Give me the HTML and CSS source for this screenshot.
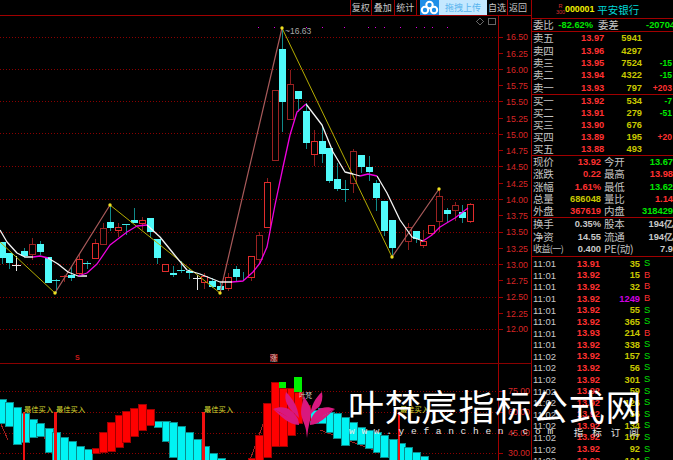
FILE: index.html
```html
<!DOCTYPE html>
<html lang="zh">
<head>
<meta charset="utf-8">
<title>行情</title>
<link rel="stylesheet" href="styles.css">
</head>
<body>
<div class="screen">
  <div class="charts">
    <div class="toolbar">
      <span class="tool first">复权</span><span class="tool">叠加</span><span class="tool">统计</span>
      <span class="upload">
        <span class="cloud"><svg width="19" height="15" viewBox="0 0 19 15"><g fill="none" stroke="#fff" stroke-width="2"><circle cx="9.5" cy="5" r="3.2"/><circle cx="5" cy="10" r="3.2"/><circle cx="14" cy="10" r="3.2"/></g></svg></span>
        <span class="upload-text">拖拽上传</span>
      </span>
      <span class="tool plain">自选</span><span class="tool last">返回</span>
    </div>
    <svg class="pane price" viewBox="0 16 532 347" shape-rendering="crispEdges">
      <g class="grid">
        <path d="M0 37H498M0 69H498M0 101H498M0 133H498M0 166H498M0 199H498M0 232H498M0 264H498M0 297H498M0 329H498"/>
      </g>
      <path class="axis" d="M498.500 15V363M498 37h5M498 53h5M498 69h5M498 85h5M498 101h5M498 118h5M498 134h5M498 150h5M498 166h5M498 183h5M498 199h5M498 215h5M498 232h5M498 248h5M498 264h5M498 280h5M498 297h5M498 313h5M498 329h5"/>
      <g class="scale">
        <text x="506" y="40">16.50</text><text x="506" y="57">16.25</text><text x="506" y="73">16.00</text><text x="506" y="89">15.75</text><text x="506" y="105">15.50</text><text x="506" y="122">15.25</text><text x="506" y="138">15.00</text><text x="506" y="154">14.75</text><text x="506" y="170">14.50</text><text x="506" y="187">14.25</text><text x="506" y="203">14.00</text><text x="506" y="219">13.75</text><text x="506" y="235">13.50</text><text x="506" y="252">13.25</text><text x="506" y="268">13.00</text><text x="506" y="284">12.75</text><text x="506" y="300">12.50</text><text x="506" y="317">12.25</text><text x="506" y="332">12.00</text>
      </g>
      <path class="dots" d="M258 27h1M274 27h1M306 27h1M322 27h1M344 27h1M368 27h1M375 27h1M384 27h1M400 27h1M416 27h1M424 27h1M432 27h1M447 27h1"/>
      <path class="tiny" d="M480 18l3.500 3.500-3.500 3.500-3.500-3.500z"/>
      <rect class="tiny" x="488.500" y="18.500" width="7" height="6"/>

      <path class="wick-red" d="M32.500 238V260M64.500 275V282M79.500 253V276M95.500 239V258M103.500 223V244M118.500 223V237M142.500 217V230M165.500 264V271M204.500 273V289M228.500 273V291M251.500 256V281M259.500 232V263M267.500 178V227M290.500 70V119M314.500 130V166M353.500 149V193M408.500 223V250M423.500 230V248M431.500 225V236M439.500 190V232M455.500 202V221M470.500 203V223"/>
      <path class="wick-cyan" d="M2.500 242V264M9.500 253V269M24.500 248V258M40.500 241V255M56.500 279V293M71.500 267V281M87.500 261V269M110.500 205V231M126.500 224V235M134.500 208V223M150.500 218V238M157.500 239V264M173.500 266V277M181.500 261V273M189.500 269V279M212.500 278V288M220.500 283V293M236.500 266V281M243.500 272V281M282.500 28V132M298.500 91V112M306.500 103V149M322.500 125V163M329.500 148V183M337.500 163V191M345.500 180V202M361.500 155V173M369.500 156V181M376.500 180V211M384.500 201V236M392.500 220V257M416.500 231V243M447.500 208V223M462.500 205V223"/>
      <path class="wick-white" d="M16.500 256V271M197.500 275V290"/>
      <path class="doji-white" d="M12 265H21M193 278H202"/>
      <path class="doji-cyan" d="M52 280H60M83 263H91M122 224H130M177 270H185M341 189H349"/>
      <path class="doji-red" d="M60 276H68"/>
      <g class="body-cyan">
        <rect x="-1" y="242" width="7" height="16"/><rect x="6" y="253" width="7" height="10"/><rect x="21" y="251" width="7" height="5"/><rect x="37" y="244" width="7" height="8"/><rect x="45" y="257" width="7" height="26"/><rect x="68" y="275" width="7" height="3"/><rect x="107" y="222" width="7" height="6"/><rect x="131" y="220" width="7" height="3"/><rect x="147" y="218" width="7" height="14"/><rect x="154" y="239" width="7" height="19"/><rect x="170" y="273" width="7" height="2"/><rect x="186" y="271" width="7" height="2"/><rect x="209" y="281" width="7" height="6"/><rect x="217" y="286" width="7" height="4"/><rect x="233" y="269" width="7" height="8"/><rect x="279" y="49" width="7" height="53"/><rect x="295" y="91" width="7" height="8"/><rect x="303" y="111" width="7" height="32"/><rect x="319" y="141" width="7" height="13"/><rect x="326" y="148" width="7" height="33"/><rect x="334" y="179" width="7" height="10"/><rect x="358" y="155" width="7" height="12"/><rect x="366" y="167" width="7" height="5"/><rect x="373" y="183" width="7" height="15"/><rect x="381" y="201" width="7" height="30"/><rect x="389" y="220" width="7" height="28"/><rect x="413" y="231" width="7" height="8"/><rect x="444" y="210" width="7" height="4"/><rect x="459" y="212" width="7" height="6"/>
      </g>
      <g class="body-red">
        <rect class="dim" x="29" y="244" width="6" height="10"/><rect x="76" y="259" width="6" height="14"/><rect x="92" y="243" width="6" height="15"/><rect class="dim" x="100" y="228" width="6" height="16"/><rect x="115" y="227" width="6" height="3"/><rect x="139" y="220" width="6" height="3"/><rect x="162" y="264" width="6" height="7"/><rect x="201" y="276" width="6" height="6"/><rect x="225" y="277" width="6" height="11"/><rect x="248" y="256" width="6" height="21"/><rect class="dim" x="256" y="235" width="6" height="24"/><rect x="264" y="182" width="6" height="45"/><rect class="dim" x="272" y="90" width="6" height="70"/><rect class="dim" x="287" y="84" width="6" height="35"/><rect x="311" y="141" width="6" height="13"/><rect class="dim" x="350" y="151" width="6" height="32"/><rect class="dim" x="405" y="227" width="6" height="14"/><rect x="420" y="241" width="6" height="4"/><rect x="428" y="225" width="6" height="8"/><rect class="dim" x="436" y="196" width="6" height="25"/><rect class="dim" x="452" y="205" width="6" height="5"/><rect x="467" y="204" width="6" height="17"/>
      </g>
      <g shape-rendering="geometricPrecision">
        <path class="zig-yellow" d="M0 242L55 293M110 205L220 293M282 28L392 257"/>
        <path class="zig-pink" d="M55 293L110 205M220 293L282 28M392 257L439 189"/>
        <path class="ma-white" d="M0 230L7 242L17 253L25 257L33 257M48 258L58 264L68 272L78 276L87 276M147 225L160 237L173 253L187 270L200 274L220 282L232 282M306 104L322 125L333 152L345 172L353 174L360 176M377 176L387 193L400 220L412 237L423 241"/>
        <path class="ma-magenta" d="M33 257L40 256L48 258M78 276L87 273L97 264L110 245L127 232L137 226L147 225M232 282L243 281L253 272L260 263L267 247L275 205L283 167L290 135L297 112L306 104M360 176L368 174L377 176M423 241L432 235L440 227L455 218L468 208"/>
        <g class="pivot"><circle cx="55" cy="293" r="1.700"/><circle cx="110" cy="205" r="1.700"/><circle cx="220" cy="293" r="1.700"/><circle cx="282" cy="28" r="1.700"/><circle cx="392" cy="257" r="1.700"/><circle cx="439" cy="189" r="1.700"/></g>
        <text class="peak" x="285" y="34">~16.63</text>
      </g>
      <g class="mark"><text x="75" y="360">S</text></g>
      <rect class="badge" x="270" y="354" width="8" height="7"/>
      <text class="badge-text" x="270" y="360.500">涨</text>
    </svg>
    <svg class="pane indicator" viewBox="0 363 532 97" shape-rendering="crispEdges">
      <path class="grid" d="M0 391H498M0 412H498M0 433H498M0 453H498"/>
      <path class="thin-red" d="M0 422L8 440M40 430L52 452M160 423L172 450M250 460L270 405M320 430L400 460"/>
      <g class="bar-cyan">
        <rect x="-2" y="399" width="7" height="24"/><rect x="5" y="402" width="7" height="24"/><rect x="13" y="407" width="7" height="37"/><rect x="21" y="413" width="7" height="29"/><rect x="29" y="419" width="7" height="18"/><rect x="36" y="423" width="7" height="13"/><rect x="45" y="428" width="7" height="24"/><rect x="52" y="432" width="7" height="30"/><rect x="60" y="437" width="7" height="25"/><rect x="68" y="441" width="7" height="21"/><rect x="76" y="446" width="7" height="16"/><rect x="84" y="449" width="7" height="13"/>
        <rect x="154" y="421" width="7" height="6"/><rect x="162" y="421" width="7" height="20"/><rect x="169" y="422" width="7" height="35"/><rect x="177" y="426" width="7" height="36"/><rect x="185" y="432" width="7" height="30"/><rect x="193" y="439" width="7" height="23"/><rect x="201" y="446" width="7" height="16"/><rect x="209" y="453" width="7" height="9"/><rect x="217" y="458" width="7" height="4"/>
        <rect x="310" y="410" width="8" height="13"/><rect x="318" y="408" width="7" height="15"/><rect x="326" y="412" width="7" height="20"/><rect x="333" y="413" width="8" height="25"/><rect x="341" y="417" width="7" height="28"/><rect x="349" y="422" width="7" height="18"/><rect x="357" y="427" width="7" height="17"/><rect x="365" y="430" width="7" height="18"/><rect x="373" y="432" width="7" height="20"/><rect x="380" y="435" width="7" height="22"/><rect x="389" y="439" width="8" height="23"/><rect x="397" y="443" width="7" height="19"/><rect x="404" y="447" width="8" height="15"/><rect x="412" y="452" width="7" height="10"/><rect x="420" y="456" width="7" height="6"/>
      </g>
      <g class="bar-red">
        <rect x="92" y="448" width="7" height="5"/><rect x="99" y="432" width="7" height="20"/><rect x="107" y="422" width="7" height="29"/><rect x="115" y="415" width="7" height="32"/><rect x="122" y="411" width="7" height="31"/><rect x="130" y="408" width="7" height="28"/><rect x="138" y="404" width="7" height="26"/><rect x="146" y="409" width="7" height="16"/>
        <rect x="248" y="458" width="7" height="4"/><rect x="255" y="435" width="7" height="27"/><rect x="263" y="403" width="7" height="54"/><rect x="271" y="382" width="7" height="64"/><rect x="279" y="388" width="7" height="58"/><rect x="287" y="388" width="7" height="47"/><rect x="294" y="392" width="7" height="31"/><rect x="302" y="405" width="7" height="15"/>
      </g>
      <g class="bar-green"><rect x="294" y="377" width="8" height="15"/><rect x="279" y="382" width="7" height="6"/></g>
      <path class="signal" d="M24 412V460M55.500 412V460M203.500 412V460M399 412V460"/>
      <g class="buy">
        <text x="24" y="412">最佳买入</text><text x="56" y="412">最佳买入</text><text x="204" y="412">最佳买入</text><text x="400" y="412">最佳买入</text>
      </g>
      <path class="axis" d="M498.500 363V460M498 391h5M498 412h5M498 433h5M498 453h5"/>
      <path class="rule" d="M0 363.500H532"/>
      <g class="scale">
        <text x="508" y="394">75.00</text><text x="508" y="415">60.00</text><text x="508" y="436">45.00</text><text x="508" y="456">30.00</text>
      </g>
    </svg>
    <div class="watermark">
      <svg class="lotus" viewBox="270 385 70 55">
        <g fill="#d8187e">
          <path d="M273 409C283 405 292 408 298 419L299 425C293 421 286 416 281 413C279 412 276 410 273 409Z"/>
          <path d="M273 409C281 416 289 425 299 425L298 421C291 419 283 414 273 409Z"/>
          <path d="M335 409C325 405 316 408 311 419L310 425C316 421 323 416 328 413C330 412 332 410 335 409Z"/>
          <path d="M335 409C327 416 319 425 310 425L311 421C318 419 326 414 335 409Z"/>
          <path d="M286 392C292 398 298 406 299 418C294 413 290 410 287 404C285 400 285 396 286 392Z"/>
          <path d="M322 392C323 398 322 403 319 407C315 410 312 412 310 416C311 406 315 398 322 392Z"/>
          <path d="M304 396C307 402 311 406 311 412C311 418 309 424 308 430L307 438L306 430C305 424 301 418 301 412C301 406 303 402 304 396Z"/>
        </g>
      </svg>
      <span class="logo-tag">叶梵</span>
      <div class="wm-text">
        <div class="wm-title">叶梵宸指标公式网</div>
        <div class="wm-sub"><span>www.yefanchen.com</span><span class="wm-sub-cn">指标订阅</span></div>
      </div>
    </div>
  </div>

  <aside class="panel">
    <header class="head"><span class="head-r"><b>R</b><b>300</b></span><span class="code">000001</span><span class="name">平安银行</span></header>
    <section class="block ratio">
      <span class="lab">委比</span><span class="num g c1">-82.62%</span><span class="lab c2">委差</span><span class="num g end">-20704</span>
    </section>
    <section class="block book sells">
      <span class="lab">卖五</span><span class="num r">13.97</span><span class="num y">5941</span><span class="num d"></span>
      <span class="lab">卖四</span><span class="num r">13.96</span><span class="num y">4297</span><span class="num d"></span>
      <span class="lab">卖三</span><span class="num r">13.95</span><span class="num y">7524</span><span class="num g">-15</span>
      <span class="lab">卖二</span><span class="num r">13.94</span><span class="num y">4322</span><span class="num g">-15</span>
      <span class="lab">卖一</span><span class="num r">13.93</span><span class="num y">797</span><span class="num r">+203</span>
    </section>
    <section class="block book buys">
      <span class="lab">买一</span><span class="num r">13.92</span><span class="num y">534</span><span class="num g">-7</span>
      <span class="lab">买二</span><span class="num r">13.91</span><span class="num y">279</span><span class="num g">-51</span>
      <span class="lab">买三</span><span class="num r">13.90</span><span class="num y">676</span><span class="num d"></span>
      <span class="lab">买四</span><span class="num r">13.89</span><span class="num y">195</span><span class="num r">+20</span>
      <span class="lab">买五</span><span class="num r">13.88</span><span class="num y">493</span><span class="num d"></span>
    </section>
    <section class="block quote q1">
      <span class="lab">现价</span><span class="num r">13.92</span><span class="lab">今开</span><span class="num g">13.67</span>
      <span class="lab">涨跌</span><span class="num r">0.22</span><span class="lab">最高</span><span class="num r">13.98</span>
      <span class="lab">涨幅</span><span class="num r">1.61%</span><span class="lab">最低</span><span class="num g">13.62</span>
      <span class="lab">总量</span><span class="num y">686048</span><span class="lab">量比</span><span class="num r">1.14</span>
      <span class="lab">外盘</span><span class="num r">367619</span><span class="lab">内盘</span><span class="num g">318429</span>
    </section>
    <section class="block quote q2">
      <span class="lab">换手</span><span class="num w">0.35%</span><span class="lab">股本</span><span class="num w">194亿</span>
      <span class="lab">净资</span><span class="num w">14.55</span><span class="lab">流通</span><span class="num w">194亿</span>
      <span class="lab small">收益(一)</span><span class="num w">0.400</span><span class="lab">PE(动)</span><span class="num w">7.9</span>
    </section>
    <section class="ticks">
      <span class="t">11:01</span><span class="num r">13.91</span><span class="num y">35</span><span class="s">S</span><span class="num w">6</span>
      <span class="t">11:01</span><span class="num r">13.92</span><span class="num y">15</span><span class="b">B</span><span class="num w">2</span>
      <span class="t">11:01</span><span class="num r">13.92</span><span class="num y">32</span><span class="b">B</span><span class="num w">2</span>
      <span class="t">11:01</span><span class="num r">13.92</span><span class="num m">1249</span><span class="b">B</span><span class="num w">61</span>
      <span class="t">11:01</span><span class="num r">13.92</span><span class="num y">55</span><span class="s">S</span><span class="num w">8</span>
      <span class="t">11:01</span><span class="num r">13.92</span><span class="num y">365</span><span class="s">S</span><span class="num w">25</span>
      <span class="t">11:01</span><span class="num r">13.93</span><span class="num y">214</span><span class="b">B</span><span class="num w">15</span>
      <span class="t">11:01</span><span class="num r">13.92</span><span class="num y">338</span><span class="s">S</span><span class="num w">10</span>
      <span class="t">11:02</span><span class="num r">13.92</span><span class="num y">157</span><span class="s">S</span><span class="num w">13</span>
      <span class="t">11:02</span><span class="num r">13.92</span><span class="num y">56</span><span class="s">S</span><span class="num w">4</span>
      <span class="t">11:02</span><span class="num r">13.92</span><span class="num y">301</span><span class="s">S</span><span class="num w">9</span>
      <span class="t">11:02</span><span class="num r">13.92</span><span class="num y">59</span><span class="s">S</span><span class="num w">8</span>
      <span class="t">11:02</span><span class="num r">13.92</span><span class="num y">126</span><span class="s">S</span><span class="num w">5</span>
      <span class="t">11:02</span><span class="num r">13.92</span><span class="num y">56</span><span class="s">S</span><span class="num w">4</span>
      <span class="t">11:02</span><span class="num r">13.92</span><span class="num y">134</span><span class="s">S</span><span class="num w">7</span>
      <span class="t">11:02</span><span class="num r">13.92</span><span class="num y">107</span><span class="s">S</span><span class="num w">15</span>
      <span class="t">11:02</span><span class="num r">13.92</span><span class="num y">92</span><span class="s">S</span><span class="num w">9</span>
      <span class="t">11:02</span><span class="num r">13.92</span><span class="num y">124</span><span class="s">S</span><span class="num w">1</span>
    </section>
  </aside>
</div>
</body>
</html>
```

FILE: styles.css
```css
* { box-sizing: border-box; }
html, body { margin: 0; height: 100%; background: #000; overflow: hidden; }
body { font-family: "Liberation Sans", "Noto Sans CJK SC", sans-serif; }

.screen { display: flex; width: 673px; height: 460px; background: #000; overflow: hidden; }

/* left side */
.charts { position: relative; width: 532px; height: 460px; flex: none; display: flex; flex-direction: column; border-right: 1px solid #a00000; }
.toolbar { height: 16px; flex: none; display: flex; justify-content: flex-end; align-items: stretch; border-bottom: 1px solid #a00000; padding-right: 3px; }
.tool { width: 22.500px; display: flex; align-items: center; justify-content: center; color: #c8c8c8; font: 9px "Noto Sans CJK SC", sans-serif; border-right: 1px solid #a00000; }
.tool.first { border-left: 1px solid #a00000; }
.tool.last { border-right: 0; width: 20px; }
.tool.plain { width: 21px; }
.upload { display: flex; margin-left: 3px; width: 67px; }
.cloud { width: 19px; background: #1e8fe8; display: flex; align-items: center; justify-content: center; }
.upload-text { flex: 1; background: #c4e8ff; color: #58b4ee; font: 9px "Noto Sans CJK SC", sans-serif; display: flex; align-items: center; justify-content: center; }

.pane { display: block; width: 532px; flex: none; overflow: hidden; }
.price { height: 347px; }
.indicator { height: 97px; }

.grid { stroke: #8a0000; stroke-width: 1; stroke-dasharray: 1 2; fill: none; }
.axis { stroke: #a00000; fill: none; }
.rule { stroke: #8a0000; fill: none; }
.scale text { fill: #d82626; font: 8.800px "Liberation Sans", sans-serif; }
.dots { stroke: #e000e0; fill: none; }
.tiny { fill: none; stroke: #666; }

.wick-red { stroke: #8c1c1c; fill: none; }
.wick-cyan { stroke: #108a8a; fill: none; }
.wick-white { stroke: #e8e8e8; fill: none; }
.doji-white { stroke: #e8e8e8; fill: none; }
.doji-cyan { stroke: #40e8e8; fill: none; }
.doji-red { stroke: #d02828; fill: none; }
.body-cyan rect { fill: #50fafa; stroke: none; }
.body-red rect { fill: #000; stroke: #e02c2c; stroke-width: 1; transform: translate(.5px, .5px); }
.body-red rect.dim { stroke: #9a2222; }

.zig-yellow { stroke: #b4ac00; fill: none; stroke-width: 1; }
.zig-pink { stroke: #a85a5a; fill: none; stroke-width: 1.200; }
.ma-white { stroke: #f4f4f4; fill: none; stroke-width: 1.300; stroke-linejoin: round; }
.ma-magenta { stroke: #f000e0; fill: none; stroke-width: 1.300; stroke-linejoin: round; }
.pivot circle { fill: #f0e020; }
.peak { fill: #a8a8a8; font: 8.500px "Liberation Sans", sans-serif; }
.mark text { fill: #c81818; font: bold 7px "Liberation Sans", sans-serif; }
.badge { fill: #700c0c; }
.badge-text { fill: #e0c0c0; font: 7.500px "Noto Sans CJK SC", sans-serif; }

.bar-cyan rect { fill: #00f4f4; stroke: #0a8c8c; stroke-width: 1; width: 8px; }
.bar-red rect { fill: #ff0000; stroke: #a00000; stroke-width: 1; width: 8px; }
.bar-green rect { fill: #00f000; }
.thin-red { stroke: #a02020; fill: none; }
.signal { stroke: #f01010; stroke-width: 2.500; fill: none; }
.buy text { fill: #d8d830; font: 7.300px "Noto Sans CJK SC", sans-serif; }

/* watermark over the lower chart */
.watermark { position: absolute; left: 270px; top: 385px; width: 403px; height: 60px; z-index: 3; display: flex; pointer-events: none; }
.lotus { width: 70px; height: 55px; flex: none; }
.logo-tag { position: absolute; left: 29px; top: 5px; color: #ccc; font: 6.500px "Noto Sans CJK SC", sans-serif; }
.wm-text { margin-left: 8px; width: 300px; }
.wm-title { color: #fff; font: 400 36px/40px "Noto Sans CJK SC", sans-serif; white-space: nowrap; letter-spacing: .8px; }
.wm-sub { color: #e8e8e8; font: 9.500px/12px "Liberation Mono", monospace; letter-spacing: 6.700px; white-space: nowrap; display: flex; padding-top: 1px; margin-left: 1px; }
.wm-sub-cn { font: 9.500px/12px "Noto Sans CJK SC", sans-serif; letter-spacing: 9px; margin-left: 14px; }

/* right panel */
.panel { width: 141px; height: 460px; flex: none; display: flex; flex-direction: column; overflow: hidden; }
.head { height: 19px; flex: none; display: flex; align-items: center; border-bottom: 1px solid #a00000; padding-left: 24px; }
.head-r { display: flex; flex-direction: column; align-items: center; width: 9px; color: #d83030; font: 5.500px/6px "Liberation Sans", sans-serif; }
.head-r b { font-weight: 400; }
.code { color: #f0f000; font: bold 8.800px "Liberation Sans", sans-serif; }
.name { color: #00d8d8; font: 10.500px "Noto Sans CJK SC", sans-serif; margin-left: 3px; white-space: nowrap; }

.block { display: grid; flex: none; border-bottom: 1px solid #a00000; padding-left: 1px; align-items: center; }
.lab { color: #c4c4c4; font: 10.500px/12px "Noto Sans CJK SC", sans-serif; white-space: nowrap; letter-spacing: -.2px; }
.lab.small { font-size: 9px; letter-spacing: -.6px; }
.num { font: bold 9.300px/12px "Liberation Sans", sans-serif; text-align: right; white-space: nowrap; }
.r { color: #ff3030; } .g { color: #00e800; } .y { color: #c8c800; } .w { color: #c8c8c8; } .m { color: #d000e0; } .d { color: transparent; }

.ratio { height: 14px; grid-template-columns: 20px 40px 5px 20px 1fr; margin-top: -1px; }
.ratio .c1 { grid-column: 2; }
.ratio .c2 { grid-column: 4; }
.ratio .end { margin-right: -2px; }

.book { grid-template-columns: 48px 21px 40px 30px; }
.book .lab { grid-column: 1; }
.sells { height: 63px; grid-auto-rows: 12.400px; }
.buys { height: 61px; grid-auto-rows: 12.100px; }
.book .num:nth-child(4n) { font-size: 8.500px; }

.quote { grid-template-columns: 20px 48px 26px 46px; column-gap: 0; }
.q1 { height: 62px; grid-auto-rows: 12.300px; }
.q2 { height: 39px; grid-auto-rows: 12.600px; }
.quote .lab:nth-child(4n+3) { padding-left: 3px; }

.ticks { flex: 1; display: grid; padding: 1px 0 0 1px; grid-template-columns: 24px 43px 40px 14px 32px; grid-auto-rows: 11.580px; align-items: center; overflow: hidden; }
.t { color: #c8c8c8; font: 9.500px/11px "Liberation Sans", sans-serif; }
.s, .b { font: 9.300px/11px "Liberation Sans", sans-serif; text-align: center; }
.s { color: #00e000; } .b { color: #ff3030; }
```
